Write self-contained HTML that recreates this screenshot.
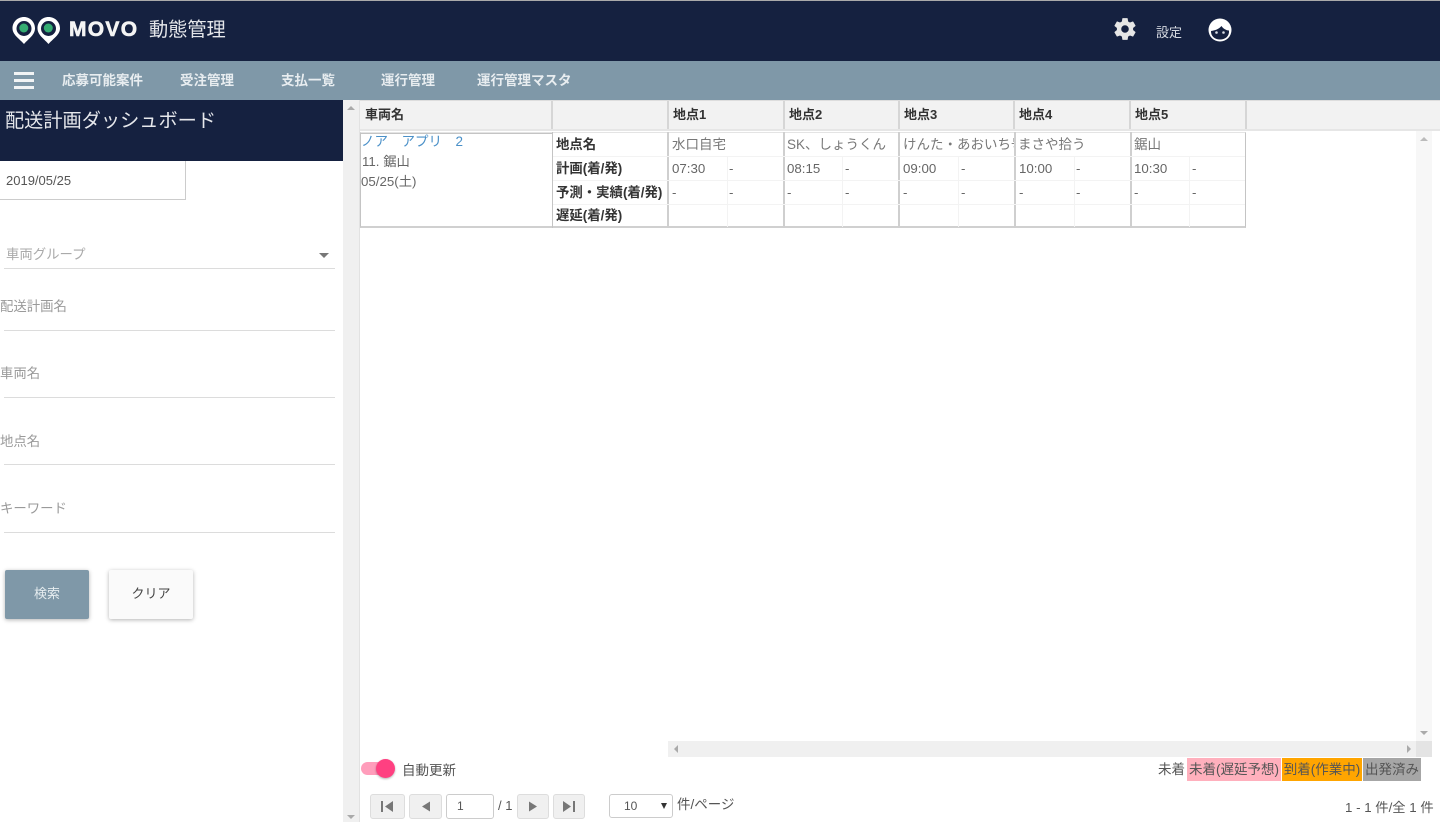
<!DOCTYPE html>
<html lang="ja">
<head>
<meta charset="utf-8">
<title>MOVO 動態管理</title>
<style>
html{background:#fff}
html,body{margin:0;padding:0;width:1440px;height:822px;overflow:hidden}
body{position:relative;font-family:"Liberation Sans","Noto Sans CJK JP",sans-serif;color:#555;filter:blur(.35px)}
.a{position:absolute;white-space:nowrap}
.b{position:absolute}
.nav{top:72px;font-size:13.5px;font-weight:bold;color:#e8edf0;line-height:18px}
.lbl{left:0;font-size:13.4px;color:#9a9a9a;line-height:20px}
.line{position:absolute;left:4px;width:331px;height:1px;background:#dcdcdc}
.th{top:101px;height:28px;background:#f2f2f2;border-right:2px solid #d6d6d6;box-sizing:border-box;font-size:13px;font-weight:bold;color:#333;line-height:28px;padding-left:5px}
.rh{left:556px;font-size:13.4px;font-weight:bold;color:#333;line-height:18px}
.t{font-size:13.3px;color:#666;line-height:18px}
.n{font-size:13.5px;color:#777;line-height:18px;overflow:hidden;height:18px}
.btn{position:absolute;top:794px;height:25px;box-sizing:border-box;background:#f0f0f0;border:1px solid #ddd;border-radius:3px}
.leg{top:758px;height:23px;font-size:13.5px;line-height:23px;color:#555;text-align:center}
</style>
</head>
<body>
<!-- header -->
<div class="b" style="left:0;top:0;width:1440px;height:61px;background:#152140;border-top:1px solid #aaa;box-sizing:border-box"></div>
<svg class="b" style="left:11px;top:16px" width="50" height="29" viewBox="0 0 50 29">
<path d="M13 1C6.500 1 1.500 6 1.500 12.300c0 6.300 6 9.700 11.500 15.700C18.500 22 24 18.600 24 12.300 24 6 19 1 13 1z" fill="#fff"/>
<circle cx="13" cy="12.500" r="7.500" fill="#152140"/><circle cx="12.800" cy="12" r="4.500" fill="#35ad72"/>
<path d="M37.500 1C31 1 26.500 6 26.500 12.300c0 6.300 5.500 9.700 11 15.700C43 22 49 18.600 49 12.300 49 6 44 1 37.500 1z" fill="#fff"/>
<circle cx="37.500" cy="12.500" r="7.500" fill="#152140"/><circle cx="37.300" cy="12" r="4.500" fill="#35ad72"/>
</svg>
<div class="a" style="left:69px;top:16px;font-size:21px;font-weight:bold;color:#f4f4f4;letter-spacing:1.300px;line-height:27px;-webkit-text-stroke:.6px #f4f4f4">MOVO</div>
<div class="a" style="left:149px;top:18px;font-size:19.2px;color:#e4e6ea;line-height:25px">動態管理</div>
<svg class="b" style="left:1112px;top:16px" width="26" height="26" viewBox="0 0 24 24"><path fill="#e6e6e6" d="M19.430 12.980c.04-.32.07-.64.07-.98s-.03-.66-.07-.98l2.110-1.650c.19-.15.24-.42.120-.64l-2-3.460c-.12-.22-.39-.3-.61-.22l-2.490 1c-.52-.4-1.080-.73-1.690-.98l-.38-2.650A.49.490 0 0 0 14 2h-4c-.25 0-.46.180-.49.420l-.38 2.650c-.61.250-1.170.590-1.690.98l-2.490-1c-.23-.09-.49 0-.61.220l-2 3.460c-.13.220-.07.490.12.640l2.110 1.650c-.04.320-.07.650-.07.980s.03.660.07.980l-2.110 1.650c-.19.150-.24.420-.12.640l2 3.460c.12.220.39.300.61.220l2.490-1c.52.400 1.080.730 1.690.980l.38 2.650c.03.240.24.420.49.420h4c.25 0 .46-.18.49-.42l.38-2.650c.61-.25 1.170-.59 1.690-.98l2.490 1c.23.090.49 0 .61-.22l2-3.460c.12-.22.07-.49-.12-.64l-2.110-1.650zM12 15.500a3.500 3.500 0 1 1 0-7 3.500 3.500 0 0 1 0 7z"/></svg>
<div class="a" style="left:1156px;top:25px;font-size:13px;color:#d5d9e0;line-height:16px">設定</div>
<svg class="b" style="left:1208px;top:18px" width="24" height="24" viewBox="0 0 24 24"><circle cx="12" cy="12" r="11.500" fill="#fff"/><path d="M3 13C7 12.500 11 11 13.500 8 15 10.500 18 12.300 21 12.500 21.500 18 17.500 21.500 12 21.500 6.500 21.500 2.800 18 3 13z" fill="#152140"/><circle cx="8.500" cy="14.500" r="1.300" fill="#d8dce4"/><circle cx="15.500" cy="14.500" r="1.300" fill="#d8dce4"/></svg>

<!-- nav -->
<div class="b" style="left:0;top:61px;width:1440px;height:39px;background:#7f98a8"></div>
<div class="b" style="left:14px;top:72px;width:20px;height:3px;background:#f2f4f5;box-shadow:0 7px 0 #f2f4f5,0 14px 0 #f2f4f5"></div>
<div class="a nav" style="left:62px">応募可能案件</div>
<div class="a nav" style="left:180px">受注管理</div>
<div class="a nav" style="left:281px">支払一覧</div>
<div class="a nav" style="left:381px">運行管理</div>
<div class="a nav" style="left:477px">運行管理マスタ</div>

<!-- sidebar -->
<div class="b" style="left:0;top:100px;width:343px;height:61px;background:#152140"></div>
<div class="a" style="left:5px;top:109px;font-size:19.2px;color:#e6e8ec;line-height:26px">配送計画ダッシュボード</div>
<div class="b" style="left:-2px;top:161px;width:188px;height:39px;box-sizing:border-box;background:#fff;border:1px solid #ccc;border-top:0"></div>
<div class="a" style="left:6px;top:172px;font-size:13px;color:#555;line-height:18px">2019/05/25</div>
<div class="a lbl" style="left:6px;top:245px;color:#aaa">車両グループ</div>
<div class="b" style="left:319px;top:253px;width:0;height:0;border-left:5px solid transparent;border-right:5px solid transparent;border-top:5px solid #777"></div>
<div class="line" style="top:268px"></div>
<div class="a lbl" style="top:297px">配送計画名</div>
<div class="line" style="top:330px"></div>
<div class="a lbl" style="top:364px">車両名</div>
<div class="line" style="top:397px"></div>
<div class="a lbl" style="top:432px">地点名</div>
<div class="line" style="top:464px"></div>
<div class="a lbl" style="top:499px">キーワード</div>
<div class="line" style="top:532px"></div>
<div class="a" style="left:5px;top:570px;width:84px;height:49px;background:#7f98a8;border-radius:2px;box-shadow:0 1px 4px rgba(0,0,0,.3);font-size:13px;color:#e6edf0;text-align:center;line-height:47px">検索</div>
<div class="a" style="left:109px;top:570px;width:84px;height:49px;background:#fafafa;border-radius:2px;box-shadow:0 1px 4px rgba(0,0,0,.3);font-size:13px;color:#444;text-align:center;line-height:47px">クリア</div>

<!-- left scrollbar -->
<div class="b" style="left:343px;top:100px;width:16px;height:722px;background:#f0f0f0;border-right:1px solid #e2e2e2"></div>
<div class="b" style="left:347px;top:106px;width:0;height:0;border-left:4px solid transparent;border-right:4px solid transparent;border-bottom:4px solid #aaa"></div>
<div class="b" style="left:347px;top:815px;width:0;height:0;border-left:4px solid transparent;border-right:4px solid transparent;border-top:4px solid #aaa"></div>

<!-- table header -->
<div class="b" style="left:360px;top:100px;width:1080px;height:31px;background:#f2f2f2;border-top:1px solid #ddd;border-bottom:2px solid #e6e6e6;box-sizing:border-box"></div>
<div class="a th" style="left:360px;width:193px">車両名</div>
<div class="a th" style="left:553px;width:116px"></div>
<div class="a th" style="left:669px;width:116px;padding-left:4px">地点1</div>
<div class="a th" style="left:785px;width:115px;padding-left:4px">地点2</div>
<div class="a th" style="left:900px;width:115px;padding-left:4px">地点3</div>
<div class="a th" style="left:1015px;width:116px;padding-left:4px">地点4</div>
<div class="a th" style="left:1131px;width:116px;padding-left:4px">地点5</div>

<!-- table body frame -->
<div class="b" style="left:360px;top:132px;width:886px;height:96px;box-sizing:border-box;border:1px solid #c4c4c4;border-bottom:2px solid #d0d0d0;border-top:1px solid #e4e4e4"></div>
<div class="b" style="left:361px;top:133px;width:191px;height:1px;background:#c4c4c4"></div>
<div class="b" style="left:552px;top:132px;width:1px;height:96px;background:#c4c4c4"></div>
<div class="b" style="left:667px;top:132px;width:2px;height:96px;background:#cfcfcf"></div>
<div class="b" style="left:783px;top:132px;width:2px;height:96px;background:#cfcfcf"></div>
<div class="b" style="left:898px;top:132px;width:2px;height:96px;background:#cfcfcf"></div>
<div class="b" style="left:1014px;top:132px;width:2px;height:96px;background:#cfcfcf"></div>
<div class="b" style="left:1130px;top:132px;width:2px;height:96px;background:#cfcfcf"></div>
<div class="b" style="left:553px;top:156px;width:692px;height:1px;background:#f3f3f3"></div>
<div class="b" style="left:553px;top:180px;width:692px;height:1px;background:#f3f3f3"></div>
<div class="b" style="left:553px;top:204px;width:692px;height:1px;background:#f3f3f3"></div>
<div class="b" style="left:727px;top:157px;width:1px;height:70px;background:#f3f3f3"></div>
<div class="b" style="left:842px;top:157px;width:1px;height:70px;background:#f3f3f3"></div>
<div class="b" style="left:958px;top:157px;width:1px;height:70px;background:#f3f3f3"></div>
<div class="b" style="left:1074px;top:157px;width:1px;height:70px;background:#f3f3f3"></div>
<div class="b" style="left:1189px;top:157px;width:1px;height:70px;background:#f3f3f3"></div>

<div class="a" style="left:361px;top:133px;font-size:13.500px;color:#4a90c8;line-height:18px;width:190px;overflow:hidden">ノア　アプリ　2</div>
<div class="a t" style="left:362px;top:153px">11. 鋸山</div>
<div class="a t" style="left:361px;top:173px">05/25(土)</div>

<div class="a rh" style="top:136px">地点名</div>
<div class="a rh" style="top:160px">計画(着/発)</div>
<div class="a rh" style="top:184px">予測・実績(着/発)</div>
<div class="a rh" style="top:207px">遅延(着/発)</div>

<div class="a n" style="left:672px;top:136px;width:110px">水口自宅</div>
<div class="a n" style="left:787px;top:136px;width:110px">SK、しょうくん</div>
<div class="a n" style="left:903px;top:136px;width:111px">けんた・あおいち号</div>
<div class="a n" style="left:1018px;top:136px;width:110px">まさや拾う</div>
<div class="a n" style="left:1134px;top:136px;width:110px">鋸山</div>

<div class="a t" style="left:672px;top:160px">07:30</div><div class="a t" style="left:729px;top:160px">-</div>
<div class="a t" style="left:787px;top:160px">08:15</div><div class="a t" style="left:845px;top:160px">-</div>
<div class="a t" style="left:903px;top:160px">09:00</div><div class="a t" style="left:961px;top:160px">-</div>
<div class="a t" style="left:1019px;top:160px">10:00</div><div class="a t" style="left:1076px;top:160px">-</div>
<div class="a t" style="left:1134px;top:160px">10:30</div><div class="a t" style="left:1192px;top:160px">-</div>

<div class="a t" style="left:672px;top:184px">-</div><div class="a t" style="left:729px;top:184px">-</div>
<div class="a t" style="left:787px;top:184px">-</div><div class="a t" style="left:845px;top:184px">-</div>
<div class="a t" style="left:903px;top:184px">-</div><div class="a t" style="left:961px;top:184px">-</div>
<div class="a t" style="left:1019px;top:184px">-</div><div class="a t" style="left:1076px;top:184px">-</div>
<div class="a t" style="left:1134px;top:184px">-</div><div class="a t" style="left:1192px;top:184px">-</div>

<!-- table scrollbars -->
<div class="b" style="left:1416px;top:131px;width:16px;height:610px;background:#f7f7f7"></div>
<div class="b" style="left:1420px;top:137px;width:0;height:0;border-left:4px solid transparent;border-right:4px solid transparent;border-bottom:4px solid #bbb"></div>
<div class="b" style="left:1420px;top:731px;width:0;height:0;border-left:4px solid transparent;border-right:4px solid transparent;border-top:4px solid #aaa"></div>
<div class="b" style="left:668px;top:741px;width:748px;height:16px;background:#f0f0f0"></div>
<div class="b" style="left:1416px;top:741px;width:16px;height:16px;background:#e4e4e4"></div>
<div class="b" style="left:674px;top:745px;width:0;height:0;border-top:4px solid transparent;border-bottom:4px solid transparent;border-right:4px solid #aaa"></div>
<div class="b" style="left:1407px;top:745px;width:0;height:0;border-top:4px solid transparent;border-bottom:4px solid transparent;border-left:4px solid #aaa"></div>

<!-- toggle -->
<div class="b" style="left:361px;top:762px;width:30px;height:13px;border-radius:7px;background:#ff9dbb"></div>
<div class="b" style="left:376px;top:759px;width:19px;height:19px;border-radius:50%;background:#ff4081;box-shadow:0 1px 2px rgba(0,0,0,.3)"></div>
<div class="a" style="left:402px;top:762px;font-size:13.500px;color:#555;line-height:17px">自動更新</div>

<!-- pager -->
<div class="btn" style="left:370px;width:35px"></div>
<svg class="b" style="left:380px;top:800px" width="14" height="13"><rect x="1" y="1" width="2" height="11" fill="#777"/><path d="M13 1v11L5 6.500z" fill="#777"/></svg>
<div class="btn" style="left:409px;width:33px"></div>
<svg class="b" style="left:420px;top:800px" width="12" height="13"><path d="M10 1.500v10L2 6.500z" fill="#777"/></svg>
<div class="b" style="left:446px;top:794px;width:48px;height:25px;box-sizing:border-box;background:#fff;border:1px solid #ccc;border-radius:3px;font-size:12px;color:#555;line-height:23px;padding-left:10px">1</div>
<div class="a" style="left:498px;top:797px;font-size:13px;color:#555;line-height:18px">/ 1</div>
<div class="btn" style="left:517px;width:32px"></div>
<svg class="b" style="left:527px;top:800px" width="12" height="13"><path d="M2 1.500v10L10 6.500z" fill="#777"/></svg>
<div class="btn" style="left:553px;width:32px"></div>
<svg class="b" style="left:562px;top:800px" width="14" height="13"><path d="M1 1v11L9 6.500z" fill="#777"/><rect x="11" y="1" width="2" height="11" fill="#777"/></svg>
<div class="b" style="left:609px;top:794px;width:64px;height:24px;box-sizing:border-box;background:#fff;border:1px solid #ccc;border-radius:3px;font-size:12px;color:#555;line-height:23px;padding-left:14px">10</div>
<div class="b" style="left:661px;top:803px;width:0;height:0;border-left:3.500px solid transparent;border-right:3.500px solid transparent;border-top:6px solid #333"></div>
<div class="a" style="left:677px;top:796px;font-size:13.500px;color:#555;line-height:18px">件/ページ</div>

<!-- legend -->
<div class="a leg" style="left:1156px;width:31px;background:#fff">未着</div>
<div class="a leg" style="left:1187px;width:94px;background:#ffb0bd">未着(遅延予想)</div>
<div class="a leg" style="left:1282px;width:80px;background:#ffa500">到着(作業中)</div>
<div class="a leg" style="left:1363px;width:58px;background:#a6a6a6">出発済み</div>
<div class="a" style="left:1345px;top:799px;font-size:13.300px;color:#555;line-height:18px">1 - 1 件/全 1 件</div>
</body>
</html>
